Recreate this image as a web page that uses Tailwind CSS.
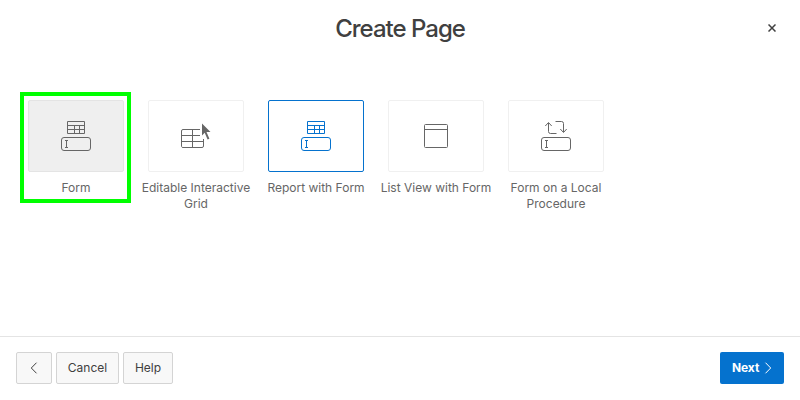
<!DOCTYPE html>
<html lang="en">
<head>
<meta charset="utf-8">
<title>Create Page</title>
<script src="https://cdn.jsdelivr.net/npm/@tailwindcss/browser@4"></script>
</head>
<body class="bg-white">
<svg class="hidden">
  <defs>
    <g id="field"><rect x="1.5" y="17.5" width="29" height="13" rx="2.5"/><path d="M5 20.5h3M5 27.5h3M6.500 20.500v7"/></g>
    <g id="table"><path d="M7.500 1.500h17v12h-17zM7.500 5.500h17M7.500 9.500h17M14.500 5.500v8M19.500 5.500v8"/></g>
  </defs>
</svg>
<div class="relative flex h-[400px] w-[800px] flex-col overflow-hidden bg-white font-['Inter',sans-serif] text-xs text-[#666]">
  <header class="flex h-14 shrink-0 items-center justify-center">
    <h1 class="pt-0.5 text-2xl font-medium leading-8 tracking-[-1px] text-[#404040]">Create Page</h1>
    <button class="absolute right-4 top-4 flex size-6 items-center justify-center" aria-label="Close">
      <svg class="size-2 stroke-[#404040]" viewBox="0 0 8 8" fill="none" stroke-width="1.5"><path d="M.5.500l7 7M7.500.500l-7 7"/></svg>
    </button>
  </header>
  <main class="flex grow items-start gap-[9px] pl-5 pt-9">
    <div class="flex h-[111px] w-[111px] flex-col items-center border-4 border-[#00ff00] pt-1">
      <div class="flex h-[72px] w-24 items-center justify-center rounded-xs border border-[#e4e4e4] bg-[#efefef]">
        <svg class="size-8" viewBox="0 0 32 32" fill="none" stroke="#666"><use href="#table"/><use href="#field"/></svg>
      </div>
      <div class="mt-2 pl-px leading-4">Form</div>
    </div>
    <ul class="flex gap-2 pt-2">
      <li class="flex w-28 flex-col items-center">
        <div class="flex h-[72px] w-24 items-center justify-center rounded-xs border border-[#f0f0f0]">
          <svg class="size-8" viewBox="0 0 32 32" fill="none" stroke="#666"><path d="M20 9.500H3a1.500 1.500 0 0 0-1.500 1.500v15.500A1.500 1.500 0 0 0 3 27.500h19a1.500 1.500 0 0 0 1.500-1.500v-7M12.500 9.500v18M1.500 15.500H20M1.500 21.500h22"/><path d="M22 3.500v12l2.700-2.700 2.900 6.700 1.800-.8-2.900-6.700h4z" fill="#666" stroke="none"/></svg>
        </div>
        <div class="mt-2 text-center leading-4 whitespace-nowrap">Editable Interactive<br>Grid</div>
      </li>
      <li class="flex w-28 flex-col items-center">
        <div class="flex h-[72px] w-24 items-center justify-center rounded-xs border border-[#0572ce]">
          <svg class="size-8" viewBox="0 0 32 32" fill="none" stroke="#0572ce"><use href="#table"/><use href="#field"/></svg>
        </div>
        <div class="mt-2 text-center leading-4 whitespace-nowrap">Report with Form</div>
      </li>
      <li class="flex w-28 flex-col items-center">
        <div class="flex h-[72px] w-24 items-center justify-center rounded-xs border border-[#f0f0f0]">
          <svg class="size-8" viewBox="0 0 32 32" fill="none" stroke="#666"><rect x="4.500" y="4.500" width="23" height="23" rx="1"/><path d="M4.500 9.500h23"/></svg>
        </div>
        <div class="mt-2 text-center leading-4 whitespace-nowrap">List View with Form</div>
      </li>
      <li class="flex w-28 flex-col items-center">
        <div class="flex h-[72px] w-24 items-center justify-center rounded-xs border border-[#f0f0f0]">
          <svg class="size-8" viewBox="0 0 32 32" fill="none" stroke="#666"><path d="M16.500 13.500h-6a2 2 0 0 1-2-2V3M5.300 6l3.200-3.500L11.700 6M15.500 1.500h6a2 2 0 0 1 2 2V12M20.300 9l3.200 3.500L26.700 9"/><use href="#field"/></svg>
        </div>
        <div class="mt-2 text-center leading-4 whitespace-nowrap">Form on a Local<br>Procedure</div>
      </li>
    </ul>
  </main>
  <footer class="flex h-16 shrink-0 items-start gap-1 border-t border-[#e4e4e4] px-4 pt-[15px] text-[#404040]">
    <button class="flex h-8 w-9 items-center justify-center rounded-xs border border-[#d4d4d4] bg-[#f8f8f8]" aria-label="Back">
      <svg class="h-3 w-2" viewBox="0 0 8 12" fill="none" stroke="#404040"><path d="M6.500.700L1.300 6l5.200 5.300"/></svg>
    </button>
    <button class="h-8 w-[63px] rounded-xs border border-[#d4d4d4] bg-[#f8f8f8]">Cancel</button>
    <button class="h-8 w-[50px] rounded-xs border border-[#d4d4d4] bg-[#f8f8f8]">Help</button>
    <button class="ml-auto flex h-8 w-16 items-center justify-start rounded-xs bg-[#0572ce] pl-3 text-left font-bold tracking-[-0.1px] text-white"><span class="w-8">Next</span>
      <svg class="h-3 w-2" viewBox="0 0 8 12" fill="none" stroke="#fff"><path d="M1.500.700L6.700 6l-5.200 5.300"/></svg>
    </button>
  </footer>
</div>
</body>
</html>
